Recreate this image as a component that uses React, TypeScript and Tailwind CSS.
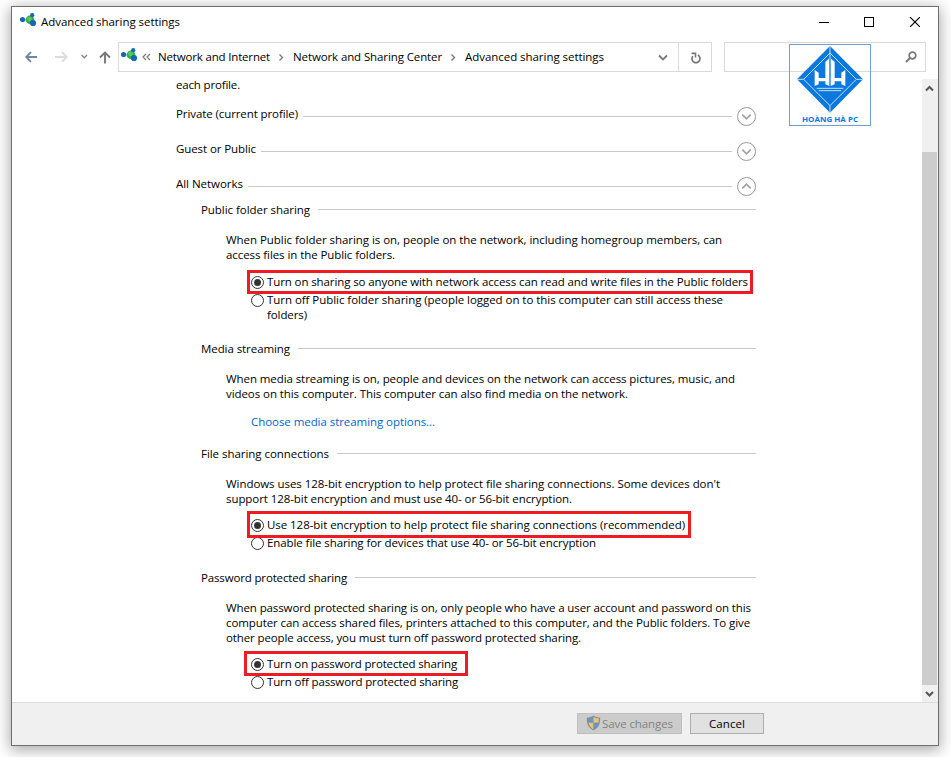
import { useLayoutEffect, useRef, useState } from 'react';
import type { ReactNode } from 'react';

type TextProps = {
  children: string;
  width: number;
  className?: string;
};

type SettingOption = {
  lines: [string, number][];
  checked?: boolean;
};

// One line of text, letter-spaced to fill the given width
function Text({ children, width, className = '' }: TextProps) {
  const ref = useRef<HTMLSpanElement>(null);
  const [spacing, setSpacing] = useState(0);

  useLayoutEffect(() => {
    if (!ref.current) return;
    const natural = ref.current.getBoundingClientRect().width;
    setSpacing((width - natural) / children.length);
  }, [children, width]);

  return (
    <span className={`block shrink-0 whitespace-nowrap ${className}`}>
      <span ref={ref} style={{ letterSpacing: `${spacing}px` }}>{children}</span>
    </span>
  );
}

function NetworkIcon() {
  return (
    <svg width="17" height="14" viewBox="0 0 17 14" className="shrink-0">
      <path d="M3 7h7l2-5M10 7l3 3" stroke="#7fb7dc" strokeWidth="1" fill="none" />
      <circle cx="10" cy="6.8" r="4.3" fill="#2fae4a" />
      <circle cx="9.6" cy="5.8" r="2.4" fill="#55c95f" />
      <circle cx="2.5" cy="6.5" r="2.6" fill="#1667b2" />
      <circle cx="12.2" cy="2.2" r="2.1" fill="#1667b2" />
      <circle cx="13" cy="10" r="3.1" fill="#1667b2" />
    </svg>
  );
}

function CrumbArrow() {
  return (
    <svg width="23" height="9" viewBox="0 0 23 9" className="shrink-0">
      <path d="M9.5 1.5l3 3-3 3" stroke="#7a7a7a" strokeWidth="1.4" fill="none" />
    </svg>
  );
}

function TitleBar() {
  return (
    <div className="flex h-[29px] items-center pl-2">
      <div className="pb-[3px]"><NetworkIcon /></div>
      <Text width={139} className="ml-1">Advanced sharing settings</Text>
      <div className="ml-auto flex items-center pr-[18px]">
        <svg width="101" height="10" viewBox="0 0 101 10" shapeRendering="crispEdges">
          <path d="M0 5.5h10" stroke="#000" />
          <rect x="45.5" y="0.5" width="9" height="9" stroke="#000" fill="none" />
          <path d="M91 0l10 10M101 0l-10 10" stroke="#000" strokeWidth="1.1" shapeRendering="auto" />
        </svg>
      </div>
    </div>
  );
}

function NavBar() {
  return (
    <div className="flex h-[30px] pl-3">
      <svg width="94" height="30" viewBox="0 0 94 30" fill="none" className="shrink-0">
        <path d="M13 15H2.5M7 10.2L2.2 15 7 19.8" stroke="#6a87a8" strokeWidth="1.8" />
        <path d="M31 15h11M38 10.2l4.8 4.8-4.8 4.8" stroke="#dcdcdc" strokeWidth="1.8" />
        <path d="M57.5 13l2.8 2.7L63 13" stroke="#8a8a8a" strokeWidth="1.5" />
        <path d="M81 21.5V10.5M76 15.5l5-5 5 5" stroke="#777" strokeWidth="1.9" />
      </svg>
      <div className="flex w-[594px] border border-[#d9d9d9]">
        <div className="flex flex-1 items-center pl-0.5">
          <div className="pb-1"><NetworkIcon /></div>
          <svg width="20" height="9" viewBox="0 0 20 9" className="shrink-0">
            <path d="M8 1l-3 3 3 3M12 1l-3 3 3 3" stroke="#7a7a7a" strokeWidth="1.2" fill="none" />
          </svg>
          <Text width={112} className="pb-px">Network and Internet</Text>
          <CrumbArrow />
          <Text width={149} className="pb-px">Network and Sharing Center</Text>
          <CrumbArrow />
          <Text width={139} className="pb-px">Advanced sharing settings</Text>
          <svg width="10" height="8" viewBox="0 0 10 8" className="mr-[10px] ml-auto">
            <path d="M1 2.500l4 4 4-4" stroke="#7a7a7a" strokeWidth="1.800" fill="none" />
          </svg>
        </div>
        <div className="flex w-[33px] items-center justify-center border-l border-[#d9d9d9]">
          <svg width="12" height="12" viewBox="0 0 12 12" fill="none" className="mt-0.5 ml-0.5">
            <path d="M2.8 4.2A4 4 0 1 0 7.8 3.1" stroke="#777" strokeWidth="1.7" />
            <path d="M1.5 1.4h4v4.2" stroke="#777" strokeWidth="1.6" />
          </svg>
        </div>
      </div>
      <div className="ml-3 flex w-[202px] items-center justify-end border border-[#d9d9d9] pr-2">
        <svg width="12" height="12" viewBox="0 0 12 12" fill="none">
          <circle cx="7.5" cy="4.5" r="3.3" stroke="#777" strokeWidth="1.7" />
          <path d="M5 7L1 11" stroke="#777" strokeWidth="2" />
        </svg>
      </div>
    </div>
  );
}

function ProfileRow({ label, width, open = false }: { label: string; width: number; open?: boolean }) {
  return (
    <div className="flex h-[19px] items-center">
      <Text width={width} className="pb-1.5">{label}</Text>
      <div className="ml-[5px] h-px flex-1 bg-[#c8c8c8]" />
      <svg width="19" height="19" viewBox="0 0 19 19" fill="none" className="ml-[5px]">
        <circle cx="9.5" cy="9.5" r="9" stroke="#999" />
        <path d={open ? 'M5.3 11.3l4.2-4.2 4.2 4.2' : 'M5.3 7.7l4.2 4.2 4.2-4.2'} stroke="#a3a3a3" strokeWidth="1.7" />
      </svg>
    </div>
  );
}

function Section({ title, width, children }: { title: string; width: number; children: ReactNode }) {
  return (
    <section className="pl-[25px]">
      <div className="flex h-[15px] items-center">
        <Text width={width}>{title}</Text>
        <div className="ml-2 h-px flex-1 bg-[#c8c8c8]" />
      </div>
      <div className="mt-[15px] pl-[25px]">{children}</div>
    </section>
  );
}

function Paragraph({ lines }: { lines: [string, number][] }) {
  return (
    <div>
      {lines.map(([text, width]) => <Text key={text} width={width}>{text}</Text>)}
    </div>
  );
}

function RadioList({ options, className, marker }: { options: SettingOption[]; className: string; marker: string }) {
  return (
    <div className={`relative flex flex-col gap-[3px] pl-[25px] ${className}`}>
      {options.map(({ lines, checked }) => (
        <label key={lines[0][0]} className="flex items-start gap-[3px]">
          <span className="mt-0.5 flex size-[13px] shrink-0 items-center justify-center rounded-full border border-[#333] bg-white">
            {checked && <span className="size-[7px] rounded-full bg-[#333]" />}
          </span>
          <Paragraph lines={lines} />
        </label>
      ))}
      <div className={`absolute border-3 border-[#ed1c24] ${marker}`} />
    </div>
  );
}

function Scrollbar() {
  return (
    <div className="mt-[7px] flex w-4 flex-col items-start bg-[#f0f0f0]">
      <svg width="15" height="73" viewBox="0 0 15 73" fill="none">
        <path d="M4 11.5L7.5 8l3.5 3.5" stroke="#555" strokeWidth="2" />
      </svg>
      <div className="w-[15px] flex-1 bg-[#cdcdcd]" />
      <svg width="15" height="17" viewBox="0 0 15 17" fill="none">
        <path d="M4 7l3.5 3.5L11 7" stroke="#555" strokeWidth="2" />
      </svg>
    </div>
  );
}

function Shield() {
  return (
    <svg width="15" height="16" viewBox="0 0 15 16">
      <path d="M7.5 .5C5.5 2 3 2.5 .8 2.5c0 6 1 10 6.700 13 5.700-3 6.700-7 6.700-13-2.200 0-4.700-.5-6.700-2z" fill="#8c8c8c" />
      <path d="M7.5 1.8C6 2.8 4 3.4 2.1 3.5c0 1.600.1 3 .4 4.300h5z" fill="#6497cc" />
      <path d="M7.5 1.8c1.500 1 3.500 1.600 5.400 1.700 0 1.600-.1 3-.4 4.300h-5z" fill="#e9c57c" />
      <path d="M2.5 7.8c.7 3 2.200 5 5 6.600V7.800z" fill="#e9c57c" />
      <path d="M12.5 7.8c-.7 3-2.200 5-5 6.600V7.800z" fill="#6497cc" />
    </svg>
  );
}

function Footer() {
  return (
    <div className="flex h-[43px] justify-end gap-2 border-t border-[#dcdcdc] bg-[#f0f0f0] pt-2.5 pr-[174px]">
      <button className="flex h-[21px] w-[105px] items-center border border-[#bfbfbf] bg-[#cccccc] pl-2 text-[#838383]">
        <div className="-mt-px"><Shield /></div>
        <Text width={71} className="ml-px">Save changes</Text>
      </button>
      <button className="flex h-[21px] w-[74px] items-center justify-center border border-[#adadad] bg-[#e1e1e1]">
        <Text width={36}>Cancel</Text>
      </button>
    </div>
  );
}

function Watermark() {
  return (
    <svg width="82" height="82" viewBox="0 0 246 246" className="absolute top-[37px] left-[777px]">
      <rect x="1.5" y="1.5" width="243" height="243" fill="none" stroke="#6f9fd8" strokeWidth="3" />
      <path d="M123 6l99 100-99 100-99-100z" fill="#0b78de" />
      <g stroke="#c5dff8" strokeWidth="3" fill="none">
        <path d="M123 27l79 79-79 79-79-79z" />
        <path d="M123 6v38M24 106h20M202 106h20M123 185v21" />
        <path d="M83 133h80M89 140h68" />
      </g>
      <path d="M77 78l12 8v16h20V54l12-11v83l-12-5v-9H89v9l-12 5zM169 78l-12 8v16h-20V54l-12-11v83l12-5v-9h20v9l12 5z" fill="#fff" />
      <text x="123" y="233" textAnchor="middle" textLength="168" lengthAdjust="spacingAndGlyphs" className="fill-[#0b78de] font-['Open_Sans'] text-[21px] font-bold">
        HOÀNG HÀ PC
      </text>
    </svg>
  );
}

export default function App() {
  return (
    <div className="h-[757px] w-[951px] overflow-hidden bg-white pt-1.5 pl-[11px] font-['Open_Sans','Noto_Sans',sans-serif] text-[11.5px] leading-[15px] text-black">
      <div className="relative flex h-[740px] w-[928px] flex-col border border-[#6e6e6e] bg-white shadow-[0_3px_14px_1px_rgba(0,0,0,0.35)]">
        <TitleBar />
        <div className="mt-1.5"><NavBar /></div>

        <div className="flex min-h-0 flex-1">
          <main className="w-[744px] pt-[5px] pl-[164px]">
            <Text width={64}>each profile.</Text>
            <div className="mt-[15px] flex flex-col gap-4">
              <ProfileRow label="Private (current profile)" width={122} />
              <ProfileRow label="Guest or Public" width={80} />
              <ProfileRow label="All Networks" width={67} open />
            </div>

            <div className="mt-1.5">
              <Section title="Public folder sharing" width={109}>
                <Paragraph
                  lines={[
                    ['When Public folder sharing is on, people on the network, including homegroup members, can', 496],
                    ['access files in the Public folders.', 169],
                  ]}
                />
                <RadioList
                  className="mt-3"
                  marker="-top-1 left-[21px] h-6 w-[506px]"
                  options={[
                    { lines: [['Turn on sharing so anyone with network access can read and write files in the Public folders', 481]], checked: true },
                    { lines: [['Turn off Public folder sharing (people logged on to this computer can still access these', 456], ['folders)', 40]] },
                  ]}
                />
              </Section>
            </div>

            <div className="mt-[19px]">
              <Section title="Media streaming" width={89}>
                <Paragraph
                  lines={[
                    ['When media streaming is on, people and devices on the network can access pictures, music, and', 509],
                    ['videos on this computer. This computer can also find media on the network.', 402],
                  ]}
                />
                <div className="mt-[13px] pl-[25px] text-[#0066cc]">
                  <Text width={184}>Choose media streaming options...</Text>
                </div>
              </Section>
            </div>

            <div className="mt-[17px]">
              <Section title="File sharing connections" width={128}>
                <Paragraph
                  lines={[
                    ["Windows uses 128-bit encryption to help protect file sharing connections. Some devices don't", 494],
                    ['support 128-bit encryption and must use 40- or 56-bit encryption.', 346],
                  ]}
                />
                <RadioList
                  className="mt-[11px]"
                  marker="-top-1.5 left-[21px] h-[27px] w-[444px]"
                  options={[
                    { lines: [['Use 128-bit encryption to help protect file sharing connections (recommended)', 418]], checked: true },
                    { lines: [['Enable file sharing for devices that use 40- or 56-bit encryption', 329]] },
                  ]}
                />
              </Section>
            </div>

            <div className="mt-5">
              <Section title="Password protected sharing" width={146}>
                <Paragraph
                  lines={[
                    ['When password protected sharing is on, only people who have a user account and password on this', 525],
                    ['computer can access shared files, printers attached to this computer, and the Public folders. To give', 524],
                    ['other people access, you must turn off password protected sharing.', 355],
                  ]}
                />
                <RadioList
                  className="mt-[11px]"
                  marker="-top-[5px] left-[18px] h-[25px] w-[224px]"
                  options={[
                    { lines: [['Turn on password protected sharing', 190]], checked: true },
                    { lines: [['Turn off password protected sharing', 191]] },
                  ]}
                />
              </Section>
            </div>
          </main>
          <div className="ml-auto flex"><Scrollbar /></div>
        </div>

        <Footer />
        <Watermark />
      </div>
    </div>
  );
}
